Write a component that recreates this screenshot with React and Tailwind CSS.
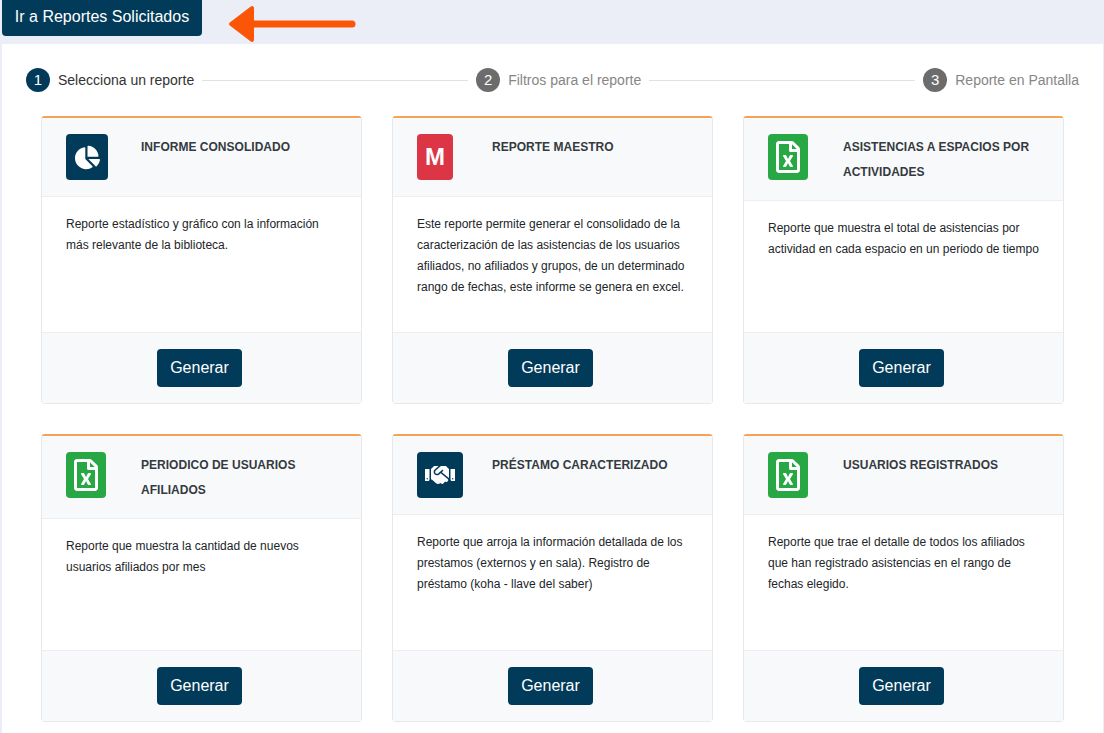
import { FaChartPie, FaRegFileExcel, FaHandshake } from 'react-icons/fa'

const reports = [
  {
    title: 'INFORME CONSOLIDADO',
    text: 'Reporte estadístico y gráfico con la información más relevante de la biblioteca.',
    icon: 'pie',
  },
  {
    title: 'REPORTE MAESTRO',
    text: 'Este reporte permite generar el consolidado de la caracterización de las asistencias de los usuarios afiliados, no afiliados y grupos, de un determinado rango de fechas, este informe se genera en excel.',
    icon: 'm',
  },
  {
    title: 'ASISTENCIAS A ESPACIOS POR ACTIVIDADES',
    text: 'Reporte que muestra el total de asistencias por actividad en cada espacio en un periodo de tiempo',
    icon: 'excel',
  },
  {
    title: 'PERIODICO DE USUARIOS AFILIADOS',
    text: 'Reporte que muestra la cantidad de nuevos usuarios afiliados por mes',
    icon: 'excel',
  },
  {
    title: 'PRÉSTAMO CARACTERIZADO',
    text: 'Reporte que arroja la información detallada de los prestamos (externos y en sala). Registro de préstamo (koha - llave del saber)',
    icon: 'hands',
  },
  {
    title: 'USUARIOS REGISTRADOS',
    text: 'Reporte que trae el detalle de todos los afiliados que han registrado asistencias en el rango de fechas elegido.',
    icon: 'excel',
  },
]

function ReportIcon({ icon }) {
  if (icon === 'pie') {
    return (
      <div className="flex h-[46px] w-[42px] items-center justify-center rounded bg-[#023b59] text-white">
        <FaChartPie size={25} />
      </div>
    )
  }
  if (icon === 'm') {
    return (
      <div className="flex h-[46px] w-9 items-center justify-center rounded bg-[#dc3545] text-[24px] font-bold text-white">
        M
      </div>
    )
  }
  if (icon === 'excel') {
    return (
      <div className="flex h-[46px] w-10 items-center justify-center rounded bg-[#28a745] text-white">
        <FaRegFileExcel size={32} />
      </div>
    )
  }
  return (
    <div className="flex h-[46px] w-[46px] items-center justify-center rounded bg-[#023b59] text-white">
      <FaHandshake size={30} />
    </div>
  )
}

function Card({ report }) {
  return (
    <div className="flex flex-col rounded border border-t-2 border-[#e6e8eb] border-t-[#f4a259] bg-white">
      <div className="flex border-b border-[#eceef1] bg-[#f8f9fb] px-6 py-4">
        <div className="w-[75px] shrink-0">
          <ReportIcon icon={report.icon} />
        </div>
        <div className="-mb-px pt-px text-xs leading-[25px] font-bold tracking-[0.02px] text-[#343a40]">
          {report.title}
        </div>
      </div>
      <div className="flex-1 px-6 pt-[17px] text-xs leading-[21px] text-[#212529]">{report.text}</div>
      <div className="flex justify-center border-t border-[#eceef1] bg-[#f8f9fb] py-4 pr-1">
        <button className="h-[38px] w-[85px] rounded bg-[#023b59] text-base text-white">Generar</button>
      </div>
    </div>
  )
}

function Step({ n, label, active }) {
  return (
    <div className="flex items-center gap-2">
      <div
        className={
          active
            ? 'flex h-6 w-6 items-center justify-center rounded-full bg-[#023b59] text-[15px] text-white'
            : 'flex h-6 w-6 items-center justify-center rounded-full bg-[#6c6c6c] text-[15px] text-white'
        }
      >
        {n}
      </div>
      <span className={active ? 'text-sm text-[#333]' : 'text-sm text-[#868686]'}>{label}</span>
    </div>
  )
}

export default function App() {
  return (
    <div className="relative h-[733px] overflow-hidden bg-[#ebeef6] font-['Liberation_Sans',Arial,sans-serif]">
      <div className="h-11 pl-0.5">
        <button className="h-9 w-[200px] rounded-b bg-[#023b59] pb-0.5 text-base text-white">
          Ir a Reportes Solicitados
        </button>
      </div>
      <svg className="absolute top-[4px] left-[227px]" width="130" height="40" viewBox="0 0 130 40">
        <path d="M26 20H125" stroke="#fb5607" strokeWidth="7" strokeLinecap="round" fill="none" />
        <path d="M4 20L25 4V36Z" fill="#fb5607" stroke="#fb5607" strokeWidth="4" strokeLinejoin="round" />
      </svg>
      <div className="mr-px ml-0.5 h-full bg-white">
        <div className="flex items-center gap-2 px-6 pt-6">
          <Step n={1} label="Selecciona un reporte" active />
          <div className="h-px flex-1 bg-[#dee2e6]" />
          <Step n={2} label="Filtros para el reporte" />
          <div className="h-px flex-1 bg-[#dee2e6]" />
          <Step n={3} label="Reporte en Pantalla" />
        </div>
        <div className="mt-6 ml-[39px] grid w-[1023px] auto-rows-[288px] grid-cols-3 gap-[30px]">
          {reports.map((r) => (
            <Card key={r.title} report={r} />
          ))}
        </div>
      </div>
    </div>
  )
}
